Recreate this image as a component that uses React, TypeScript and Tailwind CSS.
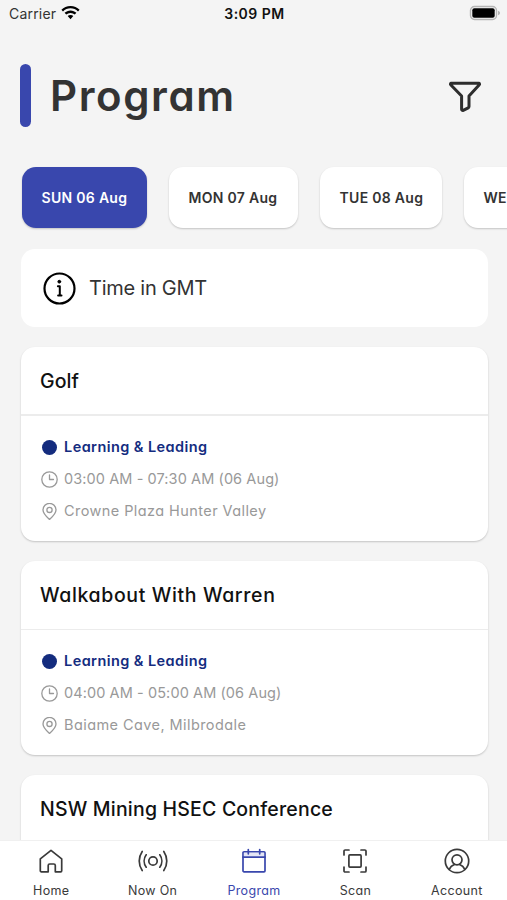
import type { ReactNode } from "react";
import clsx from "clsx";

const days = [
  { label: "SUN 06 Aug", width: "w-[125px]", active: true },
  { label: "MON 07 Aug", width: "w-[129px]" },
  { label: "TUE 08 Aug", width: "w-[122px]" },
  { label: "WED 09 Aug", width: "w-[129px]" },
];

const sessions = [
  {
    title: "Golf",
    titleClass: "border-b-2 tracking-[0.1px]",
    details: {
      track: "Learning & Leading",
      time: "03:00 AM - 07:30 AM (06 Aug)",
      place: "Crowne Plaza Hunter Valley",
    },
  },
  {
    title: "Walkabout With Warren",
    titleClass: "border-b tracking-[0.63px]",
    details: {
      track: "Learning & Leading",
      time: "04:00 AM - 05:00 AM (06 Aug)",
      place: "Baiame Cave, Milbrodale",
    },
  },
  {
    title: "NSW Mining HSEC Conference",
    titleClass: "border-b tracking-[0.19px]",
  },
];

function Icon({
  size,
  box = 24,
  stroke = 1.7,
  className,
  children,
}: {
  size: number;
  box?: number;
  stroke?: number;
  className?: string;
  children: ReactNode;
}) {
  return (
    <svg
      width={size}
      height={size}
      viewBox={`0 0 ${box} ${box}`}
      fill="none"
      stroke="currentColor"
      strokeWidth={stroke}
      strokeLinecap="round"
      strokeLinejoin="round"
      className={clsx("shrink-0", className)}
    >
      {children}
    </svg>
  );
}

const tabs = [
  {
    label: "Home",
    icon: (
      <path d="M1.3 9.8 12 1.3l10.7 8.5v12a1 1 0 0 1-1 1h-5.400v-6.300a1.500 1.500 0 0 0-1.500-1.500h-4.100a1.500 1.500 0 0 0-1.500 1.500v6.300H2.300a1 1 0 0 1-1-1Z" />
    ),
  },
  {
    label: "Now On",
    icon: (
      <>
        <circle cx="12" cy="12" r="4.2" />
        <path d="M5.200 5.800a10.500 10.500 0 0 0 0 12.400M18.800 5.800a10.500 10.500 0 0 1 0 12.400" />
        <path d="M1.200 2.400a17 17 0 0 0 0 19.200M22.800 2.400a17 17 0 0 1 0 19.200" />
      </>
    ),
  },
  {
    label: "Program",
    active: true,
    icon: (
      <>
        <path d="M2 2.8h20a1 1 0 0 1 1 1v18a1 1 0 0 1-1 1H2a1 1 0 0 1-1-1v-18a1 1 0 0 1 1-1Z" />
        <path d="M1.900 5.500h20.200" strokeWidth="3.8" strokeLinecap="butt" className="stroke-[#e4e6f5]" />
        <path d="M1 8.200h22M6.300.5v4.300M17.700.5v4.300" />
      </>
    ),
  },
  {
    label: "Scan",
    icon: (
      <>
        <rect x="5.900" y="5.900" width="12.200" height="12.200" rx="1" />
        <path d="M1 6V2.100A1.100 1.100 0 0 1 2.100 1H6M18 1h3.900A1.100 1.100 0 0 1 23 2.100V6M23 18v3.900a1.100 1.100 0 0 1-1.100 1.100H18M6 23H2.100A1.100 1.100 0 0 1 1 21.900V18" />
      </>
    ),
  },
  {
    label: "Account",
    icon: (
      <>
        <circle cx="12" cy="12" r="11.700" />
        <circle cx="12" cy="10.800" r="5" />
        <path d="M4.200 20.500c1.200-3 3.300-4.300 5.300-5M19.800 20.500c-1.200-3-3.300-4.300-5.300-5" />
      </>
    ),
  },
];

function StatusBar() {
  return (
    <div className="grid h-7 shrink-0 grid-cols-3 items-center pr-[7px] pl-[9px] text-black [font-feature-settings:normal]">
      <div className="-mt-0.5 flex items-center gap-1.5">
        <span className="text-[14px] tracking-[0.2px] text-[#333]">Carrier</span>
        <svg width="19" height="14" viewBox="0 0 19 14" className="-ml-px">
          <path d="M9.5 0C13.1 0 16.3 1.4 18.6 3.700L17 5.400C15 3.400 12.400 2.300 9.500 2.300S4 3.400 2 5.400L.4 3.700C2.700 1.400 5.900 0 9.500 0Z" />
          <path d="M9.500 4.400c2.300 0 4.400.9 5.900 2.400l-1.600 1.800A6.100 6.100 0 0 0 9.500 6.900a6.100 6.100 0 0 0-4.300 1.700L3.600 6.800c1.500-1.500 3.600-2.400 5.900-2.400Z" />
          <path d="M9.500 8.900c1.100 0 2.100.4 2.800 1.200L9.500 13.300l-2.800-3.200c.7-.8 1.700-1.200 2.800-1.200Z" />
        </svg>
      </div>
      <div className="-mt-0.5 text-center text-[14px] font-semibold tracking-[0.5px] text-[#111]">
        3:09 PM
      </div>
      <svg width="31" height="16" viewBox="0 0 31 16" className="-mt-0.5 justify-self-end">
        <rect x="1.500" y="1.500" width="26" height="13" rx="4" fill="#f4f4f4" stroke="#b5b5b5" strokeWidth="1.4" />
        <rect x="3.300" y="3.300" width="22.400" height="9.400" rx="2" fill="#000" />
        <path d="M29 5.700c1.500.5 2 1.300 2 2.300s-.5 1.800-2 2.300Z" fill="#b5b5b5" />
      </svg>
    </div>
  );
}

function SessionCard({ session }: { session: (typeof sessions)[number] }) {
  return (
    <article className="h-[194px] shrink-0 rounded-[14px] bg-white shadow-[0_1px_2px_rgba(0,0,0,0.2)]">
      <h2
        className={clsx(
          "flex h-[69px] items-center border-[#ececec] pt-0.5 pl-[19px] text-[19.5px] font-medium text-[#111]",
          session.titleClass,
        )}
      >
        {session.title}
      </h2>
      {session.details && (
        <div className="flex flex-col gap-2 pt-[19px] pl-5 text-[14.5px] text-[#999]">
          <div className="flex h-6 items-center gap-1.5 font-semibold tracking-[0.43px] text-[#142c80]">
            <span className="mx-px size-[15px] rounded-full bg-[#142c7e]" />
            <span>{session.details.track}</span>
          </div>
          <div className="flex h-6 items-center gap-1.5 tracking-[0.09px]">
            <Icon size={17} box={17} stroke={1.3}>
              <circle cx="8.500" cy="8.500" r="7.700" />
              <path d="M8.500 4v4.500h4" />
            </Icon>
            <span>{session.details.time}</span>
          </div>
          <div className="flex h-6 items-center gap-1.5 tracking-[0.42px]">
            <Icon size={17} box={17} stroke={1.3}>
              <path d="M8.500 16.400C5.500 13.700 2 10.500 2 6.900a6.500 6.500 0 0 1 13 0c0 3.600-3.500 6.800-6.500 9.500Z" />
              <circle cx="8.500" cy="6.900" r="2.600" />
            </Icon>
            <span>{session.details.place}</span>
          </div>
        </div>
      )}
    </article>
  );
}

export default function App() {
  return (
    <div className="flex h-[900px] w-[507px] flex-col overflow-hidden bg-[#f4f4f4] font-['Inter',sans-serif] [font-feature-settings:'cv11']">
      <StatusBar />

      <header className="mt-9 flex h-[63px] shrink-0 items-center pr-[25px] pl-[20px]">
        <span className="h-full w-[11px] rounded-full bg-[#3947ad]" />
        <h1 className="ml-[19px] text-[42px] font-semibold tracking-[1.6px] text-[#333]">
          Program
        </h1>
        <Icon size={34} box={34} stroke={3} className="mt-0.5 ml-auto text-[#2d2d2d]">
          <path d="M3.300 3.300h27.400a.8.8 0 0 1 .6 1.400L21 16v10.500a1.500 1.500 0 0 1-.8 1.300l-5 2.500a1.100 1.100 0 0 1-1.600-1V16L2.700 4.700a.8.8 0 0 1 .6-1.400Z" />
        </Icon>
      </header>

      <div className="mt-10 flex shrink-0 gap-[22px] pl-[22px]">
        {days.map((day) => (
          <button
            key={day.label}
            className={clsx(
              "h-[61px] shrink-0 rounded-[14px] pl-[19.5px] text-left text-[14px] font-semibold tracking-[0.3px] whitespace-nowrap shadow-[0_1px_2px_rgba(0,0,0,0.2)]",
              day.width,
              day.active ? "bg-[#3947ad] text-white" : "bg-white text-[#333]",
            )}
          >
            {day.label}
          </button>
        ))}
      </div>

      <main className="mt-[21px] flex min-h-0 flex-1 flex-col gap-5 overflow-hidden pr-[19px] pl-[21px]">
        <div className="flex h-[78px] shrink-0 items-center rounded-[14px] bg-white pl-[22px]">
          <Icon size={33} box={33} stroke={2.2} className="text-black">
            <circle cx="16.500" cy="16.500" r="15" />
            <path d="M14.900 14.300h1.900v9M15.100 23.500h3.400" strokeWidth="2" />
            <circle cx="16.300" cy="9.700" r="1.400" fill="currentColor" strokeWidth="1" />
          </Icon>
          <span className="ml-[13px] text-[20px] tracking-[-0.25px] text-[#333]">Time in GMT</span>
        </div>
        {sessions.map((session) => (
          <SessionCard key={session.title} session={session} />
        ))}
      </main>

      <nav className="grid h-[60px] shrink-0 grid-cols-5 border-t border-[#f0f0f0] bg-white">
        {tabs.map((tab) => (
          <a
            key={tab.label}
            className={clsx(
              "flex flex-col items-center pt-2 pl-px",
              tab.active ? "text-[#3947ad]" : "text-[#3a3a3a]",
            )}
          >
            <Icon size={24} className="overflow-visible">{tab.icon}</Icon>
            <span className="mt-[9px] text-[12.5px] leading-[18px] tracking-[0.32px]">{tab.label}</span>
          </a>
        ))}
      </nav>
    </div>
  );
}
